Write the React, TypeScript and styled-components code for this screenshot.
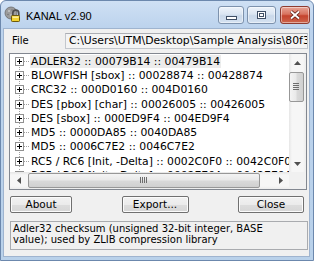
import React from "react";
import styled, { createGlobalStyle } from "styled-components";

const GlobalStyle = createGlobalStyle`
  html, body {
    margin: 0;
    padding: 0;
    background: #ffffff;
  }
  body {
    font-family: "DejaVu Sans", Verdana, sans-serif;
    color: #000;
  }
`;

const Window = styled.div`
  box-sizing: border-box;
  width: 314px;
  height: 261px;
  display: flex;
  flex-direction: column;
  border: 1px solid #6c88ad;
  border-radius: 6px 6px 0 0;
  padding: 0 3px 3px 2px;
  background: linear-gradient(to bottom, #cfe0f4 0px, #bcd3ed 27px, #b9d1ea 100%);
`;

const TitleBar = styled.div`
  height: 27px;
  flex-shrink: 0;
  display: flex;
  align-items: flex-start;
`;

const AppIcon = styled.svg`
  margin: 5px 0 0 1px;
  flex-shrink: 0;
`;

const Title = styled.div`
  margin: 7px 0 0 6px;
  font-family: "Liberation Sans", Arial, sans-serif;
  font-size: 11px;
  line-height: 16px;
  color: #000;
`;

const CaptionGroup = styled.div`
  margin-left: auto;
  margin-top: 5px;
  display: flex;
  gap: 3px;
`;

const CaptionButton = styled.div<{ $w: number; $close?: boolean }>`
  box-sizing: border-box;
  width: ${p => p.$w}px;
  height: 18px;
  border: 1px solid ${p => (p.$close ? "#8e3b30" : "#7d92ad")};
  border-radius: 3px;
  display: flex;
  align-items: center;
  justify-content: center;
  box-shadow: inset 0 0 0 1px rgba(255, 255, 255, 0.45);
  background: ${p =>
    p.$close
      ? "linear-gradient(to bottom, #e8a597 0%, #d8735f 45%, #c5432d 55%, #cd654c 100%)"
      : "linear-gradient(to bottom, #eef3fa 0%, #dae5f2 45%, #c9d8ea 55%, #d5e2f1 100%)"};
  ${p => (p.$close ? "margin-left: 1px;" : "")}
`;

const Client = styled.div`
  flex: 1;
  min-height: 0;
  display: flex;
  flex-direction: column;
  background: #f0f0f0;
  border: 1px solid #9fb4cf;
`;

const FileRow = styled.div`
  margin-top: 4px;
  height: 16px;
  display: flex;
  align-items: center;
  padding-left: 8px;
`;

const FieldLabel = styled.div`
  width: 53px;
  flex-shrink: 0;
  font-size: 10px;
  line-height: 14px;
`;

const PathBox = styled.div`
  box-sizing: border-box;
  flex: 1;
  min-width: 0;
  height: 16px;
  margin-right: 1px;
  padding-left: 3px;
  border: 1px solid #c3c7cd;
  border-top-color: #abadb3;
  background: #f4f4f4;
  overflow: hidden;
  white-space: nowrap;
  font-size: 10.8px;
  line-height: 14px;
`;

const TreeBox = styled.div`
  box-sizing: border-box;
  height: 137px;
  margin: 4px 2px 0 5px;
  border: 1px solid #828790;
  background: #ffffff;
  display: grid;
  grid-template-columns: 1fr 17px;
  grid-template-rows: 1fr 17px;
`;

const RowList = styled.div`
  overflow: hidden;
  display: flex;
  flex-direction: column;
`;

const Row = styled.div`
  height: 14.3px;
  flex-shrink: 0;
  display: flex;
  align-items: center;
  white-space: nowrap;
`;

const Gutter = styled.div<{ $first?: boolean }>`
  width: 20px;
  height: 100%;
  flex-shrink: 0;
  display: flex;
  align-items: center;
  background-image: repeating-linear-gradient(to bottom, #a0a0a0 0 1px, transparent 1px 2px),
    repeating-linear-gradient(to right, #a0a0a0 0 1px, transparent 1px 2px);
  background-repeat: no-repeat;
  background-size: 1px ${p => (p.$first ? "50%" : "100%")}, 6px 1px;
  background-position: 9px 100%, 14px 50%;
`;

const Expander = styled.svg`
  margin-left: 5px;
  display: block;
`;

const ItemText = styled.span<{ $selected?: boolean }>`
  padding: 0 1px;
  font-size: 10.8px;
  line-height: 13px;
  background: ${p => (p.$selected ? "#ececec" : "transparent")};
`;

const VScroll = styled.div`
  display: flex;
  flex-direction: column;
  background: linear-gradient(to right, #e6e6e6 0, #f6f6f6 3px, #f6f6f6 14px, #ececec 17px);
`;

const HScroll = styled.div`
  display: flex;
  align-items: stretch;
  background: linear-gradient(to bottom, #e6e6e6 0, #f6f6f6 3px, #f6f6f6 14px, #ececec 17px);
`;

const ArrowButton = styled.div`
  width: 17px;
  height: 17px;
  flex-shrink: 0;
  display: flex;
  align-items: center;
  justify-content: center;
`;

const Thumb = styled.div<{ $vertical?: boolean }>`
  box-sizing: border-box;
  flex-shrink: 0;
  display: flex;
  align-items: center;
  justify-content: center;
  border: 1px solid #979797;
  border-radius: 2px;
  ${p =>
    p.$vertical
      ? `width: 15px; height: 30px; margin: 1px 0 0 0;
         background: linear-gradient(to right, #f4f4f4 0%, #e9e9e9 45%, #d9d9d9 55%, #d0d0d0 100%);`
      : `height: 15px; width: 232px; margin: 1px 0 0 1px;
         background: linear-gradient(to bottom, #f4f4f4 0%, #e9e9e9 45%, #d9d9d9 55%, #d0d0d0 100%);`}
`;

const Track = styled.div`
  flex: 1;
`;

const Corner = styled.div`
  background: #f0f0f0;
`;

const ButtonRow = styled.div`
  margin-top: 6px;
  height: 17px;
  padding: 0 5px 0 6px;
  display: flex;
  justify-content: space-between;
`;

const PushButton = styled.button<{ $w: number }>`
  box-sizing: border-box;
  width: ${p => p.$w}px;
  height: 17px;
  padding: 0;
  border: 1px solid #707070;
  border-radius: 2px;
  box-shadow: inset 0 0 0 1px #fbfbfb;
  background: linear-gradient(to bottom, #f2f2f2 0%, #ebebeb 50%, #dddddd 51%, #d6d6d6 100%);
  font-family: "DejaVu Sans", Verdana, sans-serif;
  font-size: 10.5px;
  line-height: 13px;
  color: #000;
`;

const DescBox = styled.div`
  box-sizing: border-box;
  height: 29px;
  margin: 8px 1px 0 6px;
  padding: 1px 2px 0 2px;
  border: 1px solid #a9abaf;
  background: #f0f0f0;
  font-size: 10px;
  line-height: 11px;
  overflow: hidden;
`;

const items = [
  "ADLER32 :: 00079B14 :: 00479B14",
  "BLOWFISH [sbox] :: 00028874 :: 00428874",
  "CRC32 :: 000D0160 :: 004D0160",
  "DES [pbox] [char] :: 00026005 :: 00426005",
  "DES [sbox] :: 000ED9F4 :: 004ED9F4",
  "MD5 :: 0000DA85 :: 0040DA85",
  "MD5 :: 0006C7E2 :: 0046C7E2",
  "RC5 / RC6 [Init, -Delta] :: 0002C0F0 :: 0042C0F0",
  "RC5 / RC6 [Init, -Delta] :: 0002EE0A :: 0042EE0A"
];

const LockIcon = () => (
  <AppIcon width="16" height="16" viewBox="0 0 16 16">
    <circle cx="7" cy="7" r="6" fill="#9c9c9c" stroke="#6b6b6b" strokeWidth="0.8" />
    <circle cx="5" cy="5" r="1" fill="#c8c8c8" />
    <circle cx="8" cy="4" r="0.8" fill="#777" />
    <circle cx="4" cy="8.5" r="0.8" fill="#777" />
    <circle cx="7" cy="9" r="1" fill="#bdbdbd" />
    <path d="M8.8 10 V7.2 a3 3 0 0 1 6 0 V10" fill="none" stroke="#4e4e4e" strokeWidth="1.7" />
    <rect x="7.5" y="9.5" width="8" height="6" rx="0.8" fill="#f2d332" stroke="#6d5a0c" />
    <rect x="8.5" y="10.5" width="6" height="1.5" fill="#fbee9a" />
  </AppIcon>
);

const PlusBox = () => (
  <Expander width="9" height="9" viewBox="0 0 9 9">
    <rect x="0.5" y="0.5" width="8" height="8" fill="#fff" stroke="#919191" />
    <path d="M2 4.5 H7 M4.5 2 V7" stroke="#000" strokeWidth="1" />
  </Expander>
);

const Arrow = ({ dir }: { dir: "up" | "down" | "left" | "right" }) => {
  const d = {
    up: "M0 4 L3.5 0 L7 4 Z",
    down: "M0 0 L7 0 L3.5 4 Z",
    left: "M4 0 L4 7 L0 3.5 Z",
    right: "M0 0 L4 3.5 L0 7 Z"
  }[dir];
  const vertical = dir === "up" || dir === "down";
  return (
    <svg width={vertical ? 7 : 4} height={vertical ? 4 : 7}>
      <path d={d} fill="#505050" />
    </svg>
  );
};

const Grip = ({ vertical }: { vertical?: boolean }) =>
  vertical ? (
    <svg width="7" height="8">
      {[0, 2, 4, 6].map(y => (
        <rect key={y} x="0" y={y} width="6" height="1" fill="#6d6d6d" />
      ))}
    </svg>
  ) : (
    <svg width="8" height="7">
      {[0, 2, 4, 6].map(x => (
        <rect key={x} x={x} y="0" width="1" height="6" fill="#6d6d6d" />
      ))}
    </svg>
  );

export default function App() {
  return (
    <>
      <GlobalStyle />
      <Window>
        <TitleBar>
          <LockIcon />
          <Title>KANAL v2.90</Title>
          <CaptionGroup>
            <CaptionButton $w={26}>
              <svg width="11" height="4" style={{ marginTop: 5 }}>
                <rect x="0.5" y="0.5" width="10" height="3" fill="#fff" stroke="#3f4f66" />
              </svg>
            </CaptionButton>
            <CaptionButton $w={29}>
              <svg width="9" height="8">
                <rect x="0.5" y="0.5" width="8" height="7" fill="#fff" stroke="#3f4f66" />
                <rect x="2.5" y="2.5" width="4" height="3" fill="none" stroke="#3f4f66" />
              </svg>
            </CaptionButton>
            <CaptionButton $w={30} $close>
              <svg width="12" height="10">
                <path d="M2 1.5 L10 8.5 M10 1.5 L2 8.5" stroke="#5b1c14" strokeWidth="3.4" />
                <path d="M2 1.5 L10 8.5 M10 1.5 L2 8.5" stroke="#fff" strokeWidth="1.8" />
              </svg>
            </CaptionButton>
          </CaptionGroup>
        </TitleBar>
        <Client>
          <FileRow>
            <FieldLabel>File</FieldLabel>
            <PathBox>C:\Users\UTM\Desktop\Sample Analysis\80f3</PathBox>
          </FileRow>
          <TreeBox>
            <RowList>
              {items.map((text, i) => (
                <Row key={i}>
                  <Gutter $first={i === 0}>
                    <PlusBox />
                  </Gutter>
                  <ItemText $selected={i === 0}>{text}</ItemText>
                </Row>
              ))}
            </RowList>
            <VScroll>
              <ArrowButton>
                <Arrow dir="up" />
              </ArrowButton>
              <Thumb $vertical>
                <Grip vertical />
              </Thumb>
              <Track />
              <ArrowButton>
                <Arrow dir="down" />
              </ArrowButton>
            </VScroll>
            <HScroll>
              <ArrowButton>
                <Arrow dir="left" />
              </ArrowButton>
              <Thumb>
                <Grip />
              </Thumb>
              <Track />
              <ArrowButton>
                <Arrow dir="right" />
              </ArrowButton>
            </HScroll>
            <Corner />
          </TreeBox>
          <ButtonRow>
            <PushButton $w={62}>About</PushButton>
            <PushButton $w={67}>Export...</PushButton>
            <PushButton $w={66}>Close</PushButton>
          </ButtonRow>
          <DescBox>
            Adler32 checksum (unsigned 32-bit integer, BASE
            <br />
            value); used by ZLIB compression library
          </DescBox>
        </Client>
      </Window>
    </>
  );
}
